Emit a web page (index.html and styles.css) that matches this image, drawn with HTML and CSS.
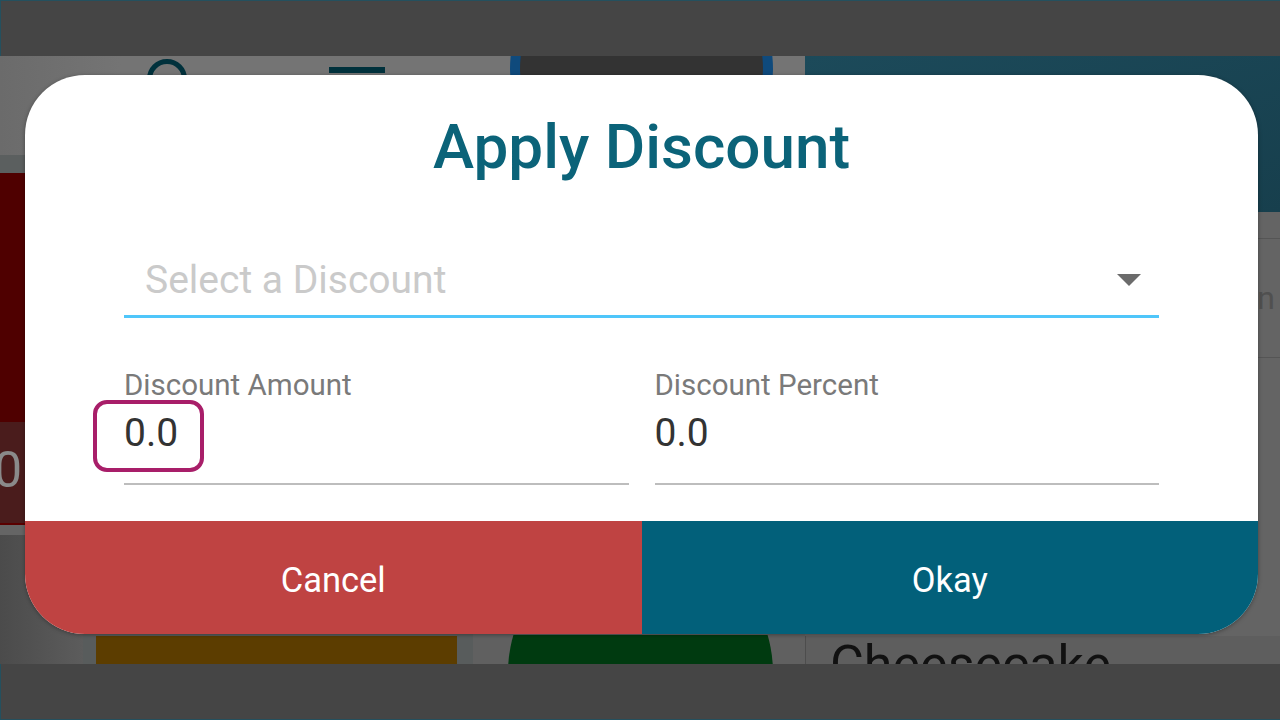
FILE: index.html
```html
<!DOCTYPE html>
<html lang="en">
<head>
<meta charset="utf-8">
<title>Apply Discount</title>
<link rel="stylesheet" href="styles.css">
</head>
<body>
<div class="device">
  <div class="topbar"></div>
  <div class="app">
    <div class="left">
      <div class="left-head">
        <div class="search-icon"></div>
        <div class="menu-icon"></div>
        <div class="avatar"></div>
      </div>
      <div class="left-body">
        <div class="side">
          <div class="side-gap"></div>
          <div class="side-red">
            <div class="side-fill"></div>
            <div class="side-total">0</div>
            <div class="side-band"></div>
          </div>
        </div>
        <div class="main">
          <div class="tiles">
            <div class="tile-brown"></div>
            <div class="tile-gap"></div>
            <div class="tile-green"></div>
          </div>
        </div>
      </div>
    </div>
    <div class="right">
      <div class="right-head"></div>
      <div class="right-body">
        <div class="right-space"></div>
        <div class="right-row"><span class="row-text">Pan</span></div>
        <div class="right-fill"></div>
        <div class="cake-row"><span class="cake-text">Cheesecake</span></div>
      </div>
    </div>
  </div>
  <div class="bottombar"></div>

  <div class="dialog">
    <div class="dlg-body">
      <h1 class="dlg-title">Apply Discount</h1>
      <div class="select">
        <span class="select-placeholder">Select a Discount</span>
        <svg class="select-arrow" width="24" height="12" viewBox="0 0 24 12"><path d="M0 0 L24 0 L12 12 Z" fill="#6b6b6b"/></svg>
      </div>
      <div class="fields">
        <div class="field">
          <div class="field-label">Discount Amount</div>
          <div class="field-value">0.0</div>
          <div class="focus-ring"></div>
        </div>
        <div class="field">
          <div class="field-label">Discount Percent</div>
          <div class="field-value">0.0</div>
        </div>
      </div>
    </div>
    <div class="dlg-actions">
      <div class="btn btn-cancel">Cancel</div>
      <div class="btn btn-okay">Okay</div>
    </div>
  </div>
</div>
</body>
</html>
```

FILE: styles.css
```css
* { box-sizing: border-box; }
html, body { margin: 0; padding: 0; }
body {
  width: 1280px;
  height: 720px;
  overflow: hidden;
  background: #454545;
  font-family: Roboto, "Liberation Sans", sans-serif;
}
.device {
  position: relative;
  width: 1280px;
  height: 720px;
  display: flex;
  flex-direction: column;
}
.topbar {
  height: 56px;
  background: #454545;
  border-top: 1px solid #24505e;
  border-left: 1px solid #24505e;
}
.bottombar {
  height: 56px;
  background: #454545;
  border-bottom: 1px solid #24505e;
  border-left: 1px solid #24505e;
}
.app {
  height: 608px;
  display: flex;
  overflow: hidden;
}
.left {
  width: 805px;
  display: flex;
  flex-direction: column;
}
.left-head {
  height: 99px;
  background: linear-gradient(90deg, #6b6b6b 0%, #747474 15%, #747474 100%);
  display: flex;
  align-items: flex-start;
  overflow: hidden;
}
.search-icon {
  width: 40px;
  height: 40px;
  margin-left: 147px;
  margin-top: 3px;
  border: 5px solid #00313c;
  border-radius: 50%;
}
.menu-icon {
  width: 56px;
  height: 6px;
  margin-left: 142px;
  margin-top: 11px;
  background: #00313c;
}
.avatar {
  width: 263px;
  height: 263px;
  margin-left: 125px;
  margin-top: -118px;
  border-radius: 50%;
  background: #333333;
  border: 10px solid #0f4a7c;
}
.left-body {
  flex: 1;
  display: flex;
}
.side {
  width: 83px;
  display: flex;
  flex-direction: column;
  background: linear-gradient(90deg, #4b4b4b, #5c5c5c);
  overflow: hidden;
}
.side-gap {
  height: 18px;
  background: #5b5f5f;
}
.side-red {
  height: 362px;
  display: flex;
  flex-direction: column;
  background: #4f0000;
  border-bottom: 10px solid #656565;
}
.side-fill { height: 249px; }
.side-total {
  height: 101px;
  background: #4a1c1c;
  color: #8a8a8a;
  font-size: 50px;
  line-height: 96px;
  margin-left: -6px;
}
.side-band {
  flex: 1;
  background: #5a0000;
}
.main {
  flex: 1;
  display: flex;
  flex-direction: column;
  justify-content: flex-end;
  background: linear-gradient(90deg, #585c5c 0%, #585c5c 54%, #606060 54%, #606060 100%);
}
.tiles {
  height: 29px;
  display: flex;
  align-items: flex-start;
  overflow: hidden;
  padding-left: 13px;
}
.tile-brown {
  width: 361px;
  height: 29px;
  margin-top: 1px;
  background: #5c3d00;
}
.tile-gap { width: 51px; }
.tile-green {
  flex: none;
  width: 265px;
  height: 265px;
  margin-top: -95px;
  border-radius: 50%;
  background: #003a10;
}
.right {
  flex: 1;
  display: flex;
  flex-direction: column;
}
.right-head {
  height: 156px;
  background: linear-gradient(160deg, #1c4a5a, #173f4d);
}
.right-body {
  flex: 1;
  display: flex;
  flex-direction: column;
  background: #646464;
}
.right-space { height: 26px; }
.right-row {
  height: 120px;
  border-top: 1px solid #555555;
  border-bottom: 1px solid #555555;
  display: flex;
  align-items: center;
  justify-content: flex-end;
  padding-right: 5px;
  overflow: hidden;
}
.row-text {
  color: #505050;
  font-size: 32px;
}
.right-fill { flex: 1; }
.cake-row {
  height: 28px;
  border-left: 1px solid #4d4d4d;
  overflow: hidden;
  padding-left: 24px;
  background: #5e5e5e;
}
.cake-text {
  display: block;
  color: #111111;
  font-size: 52px;
  line-height: 58px;
}

/* dialog overlay */
.dialog {
  position: absolute;
  left: 25px;
  top: 75px;
  width: 1233px;
  height: 559px;
  border-radius: 60px;
  background: #ffffff;
  overflow: hidden;
  box-shadow: 0 1px 4px rgba(0, 0, 0, 0.35);
  display: flex;
  flex-direction: column;
}
.dlg-body {
  flex: 1;
  padding: 36px 99px 0 99px;
}
.dlg-title {
  margin: 0;
  text-align: center;
  font-size: 62px;
  line-height: 72px;
  font-weight: 500;
  color: #0b6379;
}
.select {
  margin-top: 74px;
  display: flex;
  align-items: center;
  justify-content: space-between;
  padding: 0 18px 12px 21px;
  border-bottom: 3px solid #4fc6fa;
}
.select-placeholder {
  font-size: 39px;
  line-height: 46px;
  color: #cacaca;
}
.select-arrow { display: block; }
.fields {
  margin-top: 50px;
  display: flex;
  gap: 26px;
}
.field {
  flex: 1;
  position: relative;
  border-bottom: 2px solid #bdbdbd;
  padding-bottom: 27px;
}
.field-label {
  font-size: 29.5px;
  line-height: 35px;
  color: #7a7a7a;
}
.field-value {
  margin-top: 7px;
  font-size: 39px;
  line-height: 46px;
  color: #333333;
}
.focus-ring {
  position: absolute;
  left: -31px;
  top: 32px;
  width: 111px;
  height: 72px;
  border: 4px solid #a81e69;
  border-radius: 14px;
}
.dlg-actions {
  height: 113px;
  display: flex;
}
.btn {
  flex: 1;
  display: flex;
  align-items: center;
  justify-content: center;
  padding-top: 4px;
  color: #ffffff;
  font-size: 34.5px;
}
.btn-cancel { background: #bf4342; }
.btn-okay { background: #02607a; }
```
